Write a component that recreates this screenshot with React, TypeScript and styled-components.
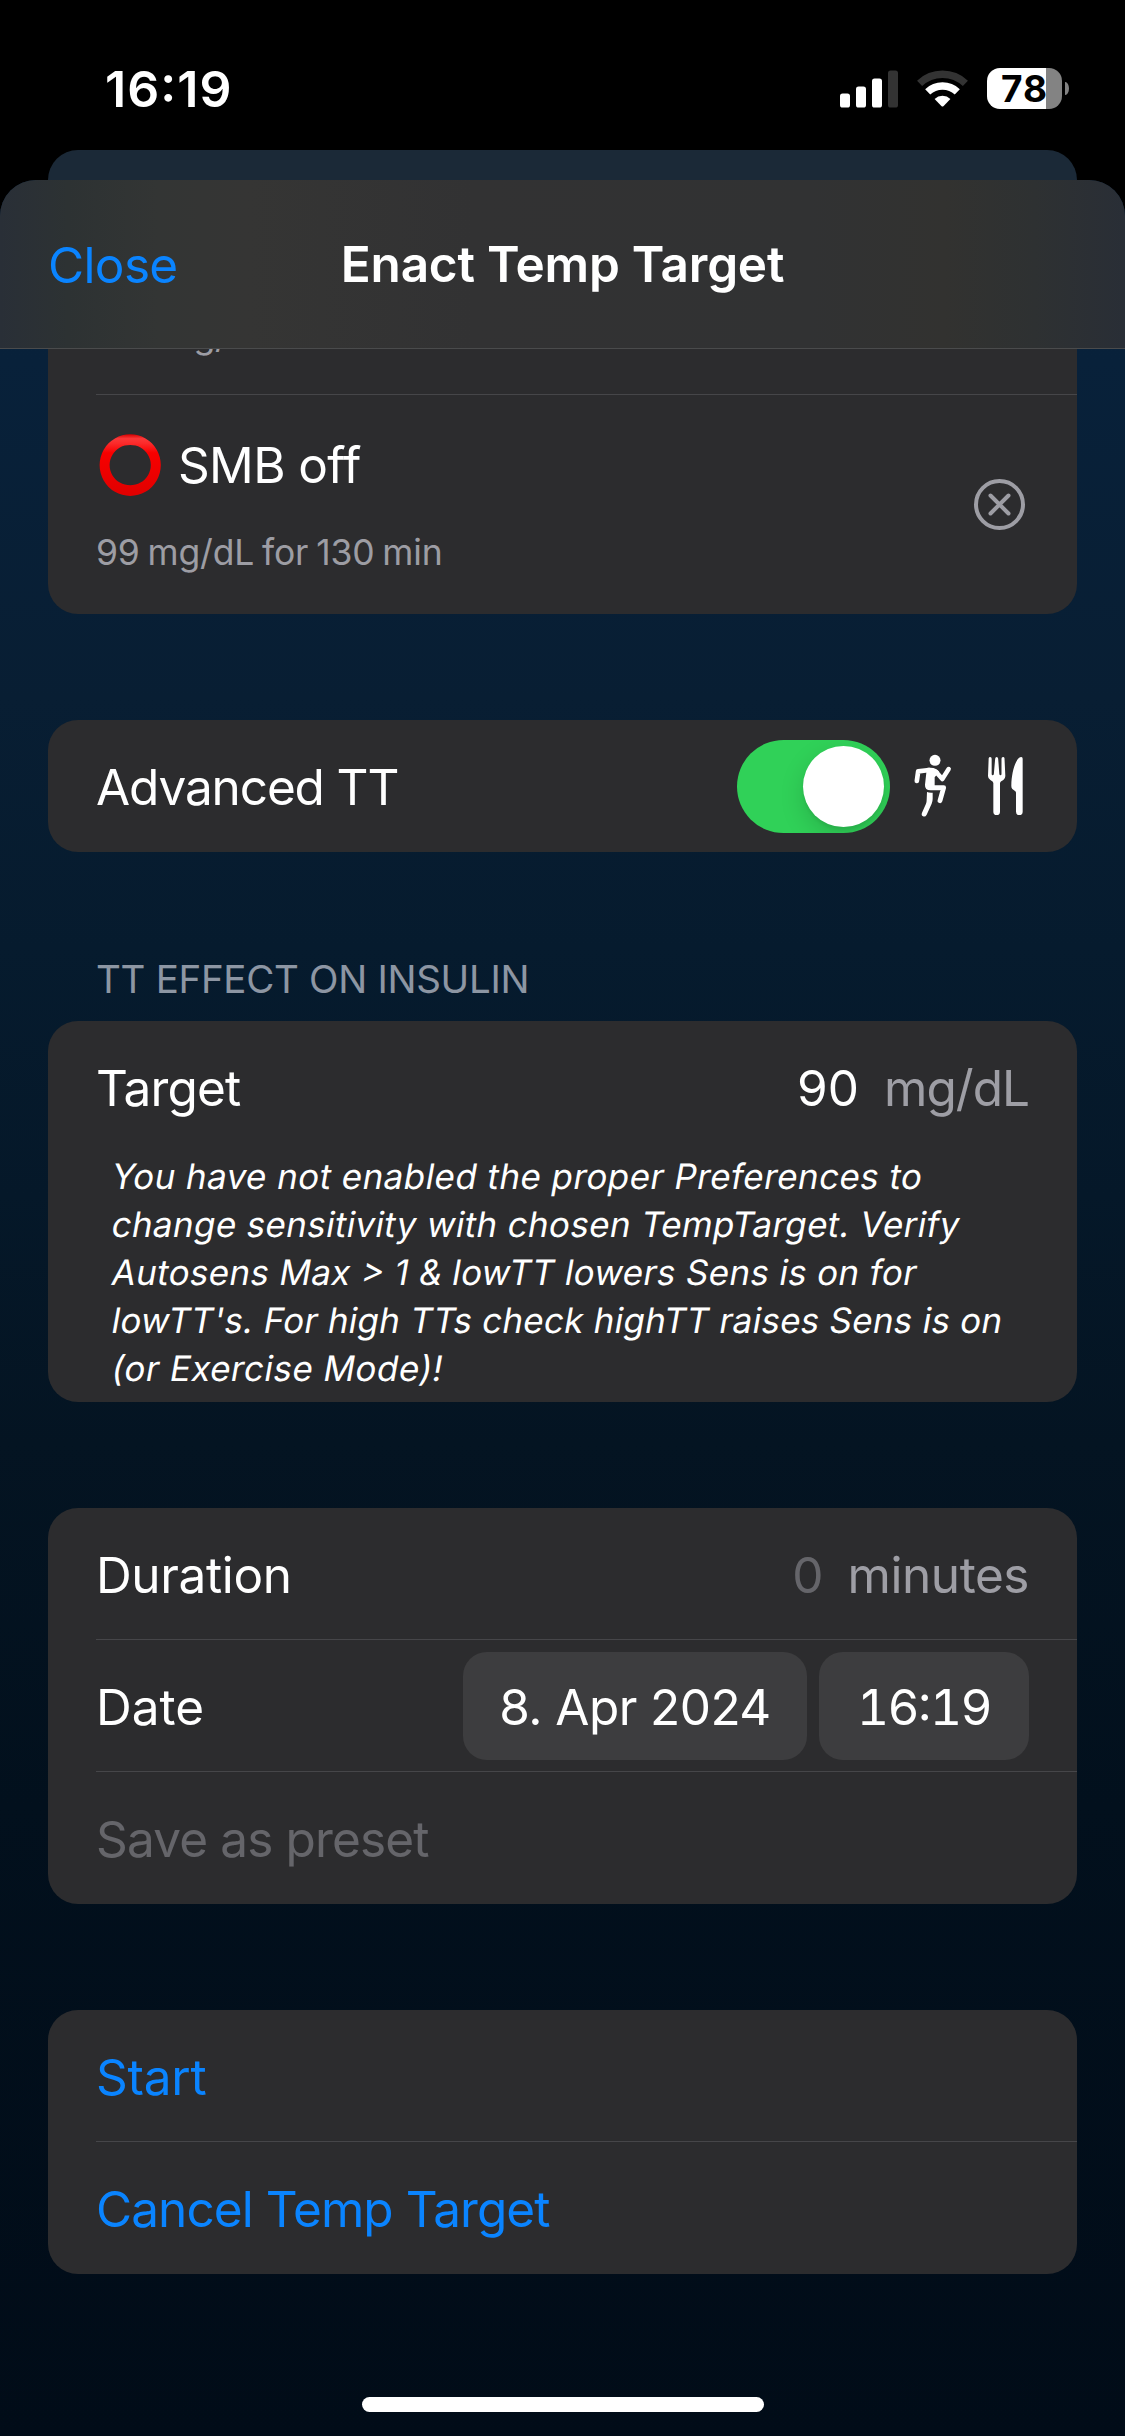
import React from "react";
import styled, { createGlobalStyle } from "styled-components";

const GlobalStyle = createGlobalStyle`
  *, *::before, *::after { box-sizing: border-box; }
  body { margin: 0; background: #000; }
  button { border: 0; padding: 0; margin: 0; background: none; font: inherit; color: inherit; }
`;

const color = {
  label: "#ffffff",
  secondary: "rgba(235, 235, 245, 0.6)",
  tertiary: "rgba(235, 235, 245, 0.3)",
  tint: "#0a84ff",
  card: "#2c2c2e",
  separator: "#464649",
  pill: "#3d3d3f",
  green: "#30d158",
};

const Screen = styled.div`
  width: 1125px;
  height: 2436px;
  display: flex;
  flex-direction: column;
  overflow: hidden;
  background: #000;
  color: ${color.label};
  font-family: Inter, "Liberation Sans", sans-serif;
  font-feature-settings: "calt" 1;
  font-size: 49.5px;
  line-height: 60px;
  white-space: nowrap;
`;

const StatusBar = styled.header`
  height: 150px;
  flex: none;
  display: flex;
  align-items: center;
  justify-content: space-between;
  padding: 27px 56px 0 105px;
`;

const Clock = styled.span`
  font-size: 50px;
  font-weight: 600;
  letter-spacing: 1.1px;
`;

const StatusIcons = styled.div`
  display: flex;
  align-items: center;
  gap: 19px;
`;

const Battery = styled.div`
  display: flex;
  align-items: center;
  gap: 3px;
`;

const BatteryBody = styled.div<{ $level: number }>`
  width: 75px;
  height: 41px;
  border-radius: 13px;
  display: flex;
  align-items: center;
  justify-content: flex-end;
  padding-right: 14px;
  background: linear-gradient(
    90deg,
    #fff ${(p) => p.$level}%,
    #838383 ${(p) => p.$level}%
  );
  color: #000;
  font-size: 37px;
  font-weight: 700;
  line-height: 41px;
  letter-spacing: 1px;
`;

const BatteryCap = styled.div`
  width: 4px;
  height: 13px;
  border-radius: 0 4px 4px 0 / 0 7px 7px 0;
  background: #838383;
`;

const BackSheet = styled.div`
  height: 30px;
  flex: none;
  margin: 0 48px;
  border-radius: 30px 30px 0 0;
  background: #1b2937;
`;

const Sheet = styled.main`
  flex: 1;
  min-height: 0;
  display: flex;
  flex-direction: column;
  border-radius: 36px 36px 0 0;
  overflow: hidden;
  background: linear-gradient(
    180deg,
    #09233d 0%,
    #08213a 8%,
    #081e33 23%,
    #061b2e 34%,
    #051829 45%,
    #041422 56%,
    #02101d 72%,
    #010c18 100%
  );
`;

const NavBar = styled.nav`
  height: 169px;
  flex: none;
  display: grid;
  grid-template-columns: 1fr auto 1fr;
  align-items: center;
  padding: 0 48px;
  border-bottom: 1px solid #4a4b4c;
  background: linear-gradient(
    90deg,
    #292f37 0%,
    #2d3233 6%,
    #333534 14%,
    #353534 22%,
    #323233 42%,
    #313233 72%,
    #323230 84%,
    #2e3132 92%,
    #292e36 100%
  );
`;

const CloseButton = styled.button`
  justify-self: start;
  padding-top: 2px;
  color: ${color.tint};
  letter-spacing: -0.65px;
`;

const Title = styled.h1`
  margin: 0;
  font-size: inherit;
  font-weight: 600;
  letter-spacing: -0.23px;
`;

const Form = styled.div`
  display: flex;
  flex-direction: column;
  gap: 106px;
  padding: 0 48px;
`;

const Card = styled.section<{ $cut?: boolean }>`
  display: flex;
  flex-direction: column;
  border-radius: ${(p) => (p.$cut ? "0 0 30px 30px" : "30px")};
  background: ${color.card};
  overflow: hidden;
`;

const Group = styled.div`
  display: flex;
  flex-direction: column;
  margin-top: -3px;
`;

const GroupHeader = styled.h2`
  margin: 0;
  padding: 0 0 18px 48px;
  font-size: 38.5px;
  font-weight: 400;
  line-height: 48px;
  letter-spacing: -0.3px;
  color: ${color.secondary};
`;

const Separator = styled.hr`
  width: 981px;
  height: 1px;
  margin: -1px 0 0 auto;
  border: 0;
  background: ${color.separator};
`;

const Row = styled.div`
  height: 132px;
  display: flex;
  align-items: center;
  justify-content: space-between;
  padding: 0 48px;
`;

const ClippedRow = styled.div`
  height: 46px;
  display: flex;
  align-items: flex-end;
  padding: 0 48px 38px;
  overflow: hidden;
`;

const PresetRow = styled.div`
  height: 219px;
  display: flex;
  align-items: center;
  justify-content: space-between;
  padding: 0 52px 0 48px;
`;

const PresetText = styled.div`
  display: flex;
  flex-direction: column;
  gap: 37px;
`;

const PresetName = styled.div`
  display: flex;
  align-items: center;
  gap: 15px;
  height: 60px;
  letter-spacing: -0.65px;
`;

const PresetDetail = styled.div`
  font-size: 35.5px;
  line-height: 42px;
  letter-spacing: -0.2px;
  word-spacing: -1.8px;
  color: ${color.secondary};
`;

const Text = styled.span<{ $tone?: "secondary" | "tertiary"; $track?: number }>`
  padding-top: 2px;
  color: ${(p) => color[p.$tone ?? "label"]};
  letter-spacing: ${(p) => p.$track ?? 0}px;
`;

const Action = styled.button<{ $track?: number }>`
  padding-top: 2px;
  color: ${color.tint};
  letter-spacing: ${(p) => p.$track ?? 0}px;
`;

const Trailing = styled.div<{ $gap: number }>`
  display: flex;
  align-items: center;
  gap: ${(p) => p.$gap}px;
`;

const Toggle = styled.div`
  width: 153px;
  height: 93px;
  display: flex;
  justify-content: flex-end;
  align-items: center;
  padding: 6px;
  border-radius: 47px;
  background: ${color.green};
  overflow: hidden;
`;

const Knob = styled.div`
  width: 81px;
  height: 81px;
  border-radius: 50%;
  background: #fff;
  box-shadow: 0 9px 24px rgba(0, 0, 0, 0.15), 0 3px 3px rgba(0, 0, 0, 0.06);
`;

const ToggleIcons = styled.div`
  display: flex;
  gap: 28px;
  margin-left: 22px;
`;

const Note = styled.div`
  display: flex;
  flex-direction: column;
  margin-top: -1px;
  padding: 0 0 10px 62px;
  font-size: 35px;
  line-height: 48px;
`;

const NoteLine = styled.span<{ $track: number }>`
  transform: skewX(-10deg);
  transform-origin: 0 37px;
  letter-spacing: ${(p) => p.$track}px;
`;

const Pill = styled.div<{ $width: number; $track: number; $tabular?: boolean }>`
  width: ${(p) => p.$width}px;
  height: 108px;
  display: flex;
  align-items: center;
  justify-content: center;
  padding-top: 2px;
  border-radius: 24px;
  background: ${color.pill};
  letter-spacing: ${(p) => p.$track}px;
  font-feature-settings: "calt" 1, "tnum" ${(p) => (p.$tabular ? 1 : 0)};
`;

const HomeIndicator = styled.div`
  width: 402px;
  height: 15px;
  margin: auto auto 24px;
  border-radius: 8px;
  background: #fff;
`;

const SignalIcon = () => (
  <svg width="58" height="38" viewBox="0 0 58 38">
    <rect x="0" y="23.5" width="10" height="14" rx="2.6" fill="#fff" />
    <rect x="16" y="16.5" width="10" height="21" rx="2.6" fill="#fff" />
    <rect x="32" y="8.5" width="10" height="29" rx="2.6" fill="#fff" />
    <rect x="48" y="0.5" width="10" height="37" rx="2.6" fill="#333" />
  </svg>
);

const WifiIcon = () => (
  <svg width="51" height="38" viewBox="0 0 51 38" fill="none" strokeWidth="7.4">
    <path d="M2.6 13.4A33.3 33.3 0 0 1 48.4 13.4" stroke="#333" />
    <path d="M10.7 21.9A21.6 21.6 0 0 1 40.3 21.9" stroke="#fff" />
    <path d="M17.6 28.9A11.8 11.8 0 0 1 33.4 28.9L26.4 36.2Q25.5 37 24.6 36.2Z" fill="#fff" />
  </svg>
);

const RingEmoji = () => (
  <svg width="67" height="62" viewBox="0 0 67 62">
    <defs>
      <linearGradient id="ring" x1="0" y1="0" x2="0" y2="1">
        <stop offset="0" stopColor="#d40000" />
        <stop offset="0.07" stopColor="#fb3838" />
        <stop offset="0.15" stopColor="#fb2a2a" />
        <stop offset="0.3" stopColor="#f80000" />
        <stop offset="1" stopColor="#e00000" />
      </linearGradient>
    </defs>
    <path
      fillRule="evenodd"
      fill="url(#ring)"
      d="M34.2 0.300a30.6 30.8 0 1 0 .01 0ZM34.2 10.9a20.6 20.2 0 1 1 -.01 0Z"
    />
  </svg>
);

const RemoveIcon = () => (
  <svg width="51" height="51" viewBox="0 0 51 51" fill="none" stroke="#9d9da4" strokeWidth="4">
    <circle cx="25.5" cy="25.5" r="23.5" />
    <path d="M16.5 16.5l18 18M34.5 16.5l-18 18" strokeLinecap="round" />
  </svg>
);

const RunnerIcon = () => (
  <svg width="44" height="68" viewBox="36 36 132 204" fill="none" stroke="#fff" strokeLinejoin="round">
    <circle cx="105" cy="61" r="16.5" fill="#fff" stroke="none" />
    <path d="M50.5 123L54.5 94L88 90" strokeWidth="14" strokeLinecap="round" />
    <path d="M98 92Q106 93 111 99L127 117L146 87" strokeWidth="13.5" strokeLinecap="round" />
    <path
      d="M80 84C100 81 112 86 118 96L104 112V138H120V151H92Q74 151 75 134L79 98Z"
      fill="#fff"
      stroke="none"
    />
    <path d="M98 143H131L120 182" strokeWidth="14.5" strokeLinecap="round" />
    <path
      d="M81 156Q88 159 98 158V176Q98 184 95 191L80 224Q76 232 69 229Q63 226 66 218L78 191Q80 186 80 180Z"
      fill="#fff"
      stroke="none"
    />
  </svg>
);

const CutleryIcon = () => (
  <svg width="45" height="68" viewBox="252 36 135 204" fill="#fff">
    <path d="M266 55Q267 51 270.500 51Q275 51 275 56V102Q275 106 278 106Q281 106 281.500 102L285.500 56Q286 51 290 51Q294 51 294.500 56L298 102Q298.500 106 301.500 106Q304.500 106 304.500 102V56Q304.500 51 309 51Q313 51 313.500 55L316 108Q316 116 310 120Q300 125 300 129V215Q300 225 290 225Q280 225 280 215V129Q280 125 271 120Q264 116 264 108Z" />
    <path d="M368 56V215Q368 225 358 225Q348 225 348 215V158Q348 155 345 153L337 147Q333.500 144 334 136C334.500 100 345 60 360 52Q368 49 368 56Z" />
  </svg>
);

const noteLines: { text: string; track: number }[] = [
  { text: "You have not enabled the proper Preferences to", track: 0.42 },
  { text: "change sensitivity with chosen TempTarget. Verify", track: 0.33 },
  { text: "Autosens Max > 1 & lowTT lowers Sens is on for", track: 0.32 },
  { text: "lowTT's. For high TTs check highTT raises Sens is on", track: 0.24 },
  { text: "(or Exercise Mode)!", track: 0.45 },
];

export default function App() {
  return (
    <>
      <GlobalStyle />
      <Screen>
        <StatusBar>
          <Clock>16:19</Clock>
          <StatusIcons>
            <SignalIcon />
            <WifiIcon />
            <Battery>
              <BatteryBody $level={78.6}>78</BatteryBody>
              <BatteryCap />
            </Battery>
          </StatusIcons>
        </StatusBar>

        <BackSheet />

        <Sheet>
          <NavBar>
            <CloseButton>Close</CloseButton>
            <Title>Enact Temp Target</Title>
          </NavBar>

          <Form>
            <Card $cut>
              <ClippedRow>
                <PresetDetail>100 mg/dL</PresetDetail>
              </ClippedRow>
              <Separator />
              <PresetRow>
                <PresetText>
                  <PresetName>
                    <RingEmoji />
                    SMB off
                  </PresetName>
                  <PresetDetail>99 mg/dL for 130 min</PresetDetail>
                </PresetText>
                <RemoveIcon />
              </PresetRow>
            </Card>

            <Card>
              <Row>
                <Text $track={-1.12}>Advanced TT</Text>
                <Trailing $gap={0}>
                  <Toggle>
                    <Knob />
                  </Toggle>
                  <ToggleIcons>
                    <RunnerIcon />
                    <CutleryIcon />
                  </ToggleIcons>
                </Trailing>
              </Row>
            </Card>

            <Group>
              <GroupHeader>TT EFFECT ON INSULIN</GroupHeader>
              <Card>
                <Row>
                  <Text $track={-0.85}>Target</Text>
                  <Trailing $gap={25}>
                    <Text $track={0}>90</Text>
                    <Text $tone="secondary" $track={-0.97}>mg/dL</Text>
                  </Trailing>
                </Row>
                <Note>
                  {noteLines.map((line) => (
                    <NoteLine key={line.text} $track={line.track}>
                      {line.text}
                    </NoteLine>
                  ))}
                </Note>
              </Card>
            </Group>

            <Card>
              <Row>
                <Text $track={-0.35}>Duration</Text>
                <Trailing $gap={24}>
                  <Text $tone="tertiary">0</Text>
                  <Text $tone="secondary" $track={-0.45}>minutes</Text>
                </Trailing>
              </Row>
              <Separator />
              <Row>
                <Text $track={0}>Date</Text>
                <Trailing $gap={12}>
                  <Pill $width={344} $track={-0.55}>8. Apr 2024</Pill>
                  <Pill $width={210} $track={-1.5} $tabular>16:19</Pill>
                </Trailing>
              </Row>
              <Separator />
              <Row>
                <Text $tone="tertiary" $track={-0.85}>Save as preset</Text>
              </Row>
            </Card>

            <Card>
              <Row>
                <Action $track={-0.25}>Start</Action>
              </Row>
              <Separator />
              <Row>
                <Action $track={-0.92}>Cancel Temp Target</Action>
              </Row>
            </Card>
          </Form>

          <HomeIndicator />
        </Sheet>
      </Screen>
    </>
  );
}
